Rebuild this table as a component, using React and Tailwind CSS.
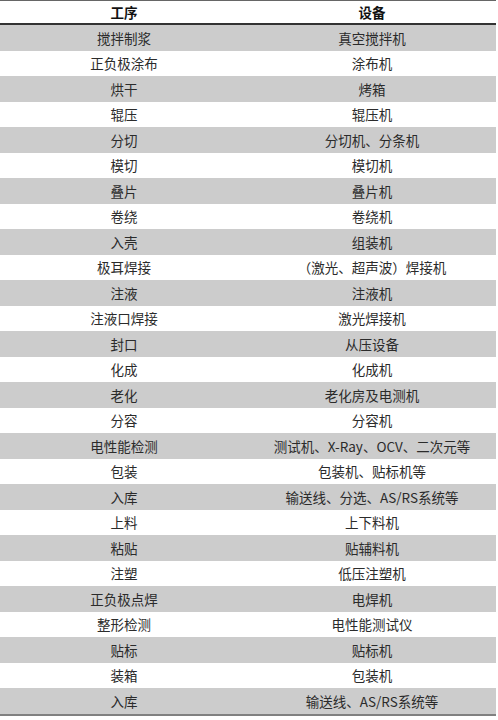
import React from "react";

const rows = [
  ["搅拌制浆", "真空搅拌机"],
  ["正负极涂布", "涂布机"],
  ["烘干", "烤箱"],
  ["辊压", "辊压机"],
  ["分切", "分切机、分条机"],
  ["模切", "模切机"],
  ["叠片", "叠片机"],
  ["卷绕", "卷绕机"],
  ["入壳", "组装机"],
  ["极耳焊接", "（激光、超声波）焊接机"],
  ["注液", "注液机"],
  ["注液口焊接", "激光焊接机"],
  ["封口", "从压设备"],
  ["化成", "化成机"],
  ["老化", "老化房及电测机"],
  ["分容", "分容机"],
  ["电性能检测", "测试机、X-Ray、OCV、二次元等"],
  ["包装", "包装机、贴标机等"],
  ["入库", "输送线、分选、AS/RS系统等"],
  ["上料", "上下料机"],
  ["粘贴", "贴辅料机"],
  ["注塑", "低压注塑机"],
  ["正负极点焊", "电焊机"],
  ["整形检测", "电性能测试仪"],
  ["贴标", "贴标机"],
  ["装箱", "包装机"],
  ["入库", "输送线、AS/RS系统等"],
];

export default function App() {
  return (
    <div
      className="w-[498px] h-[720px] bg-white text-[#2b2b2b]"
      style={{ fontFamily: '"Noto Sans CJK SC", "Noto Sans", sans-serif' }}
    >
      <div className="w-[496px] border-t border-[#666666]">
        <div className="grid grid-cols-2 h-[24px] border-b-2 border-[#333333] text-[13.5px] font-bold text-[#111111]">
          <div className="flex items-center justify-center">工序</div>
          <div className="flex items-center justify-center">设备</div>
        </div>
        {rows.map(([a, b], i) => (
          <div
            key={i}
            className={
              "grid grid-cols-2 h-[25.5px] text-[13.5px] " +
              (i % 2 === 0 ? "bg-[#cccccc]" : "bg-white")
            }
          >
            <div className="flex items-center justify-center">{a}</div>
            <div className="flex items-center justify-center">{b}</div>
          </div>
        ))}
        <div className="h-[2px] bg-[#808080]" />
      </div>
    </div>
  );
}
